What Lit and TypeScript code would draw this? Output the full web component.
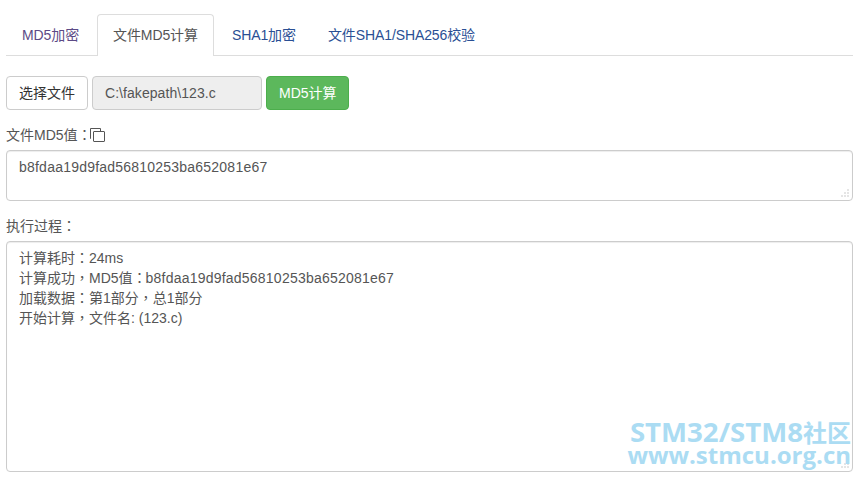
import { LitElement, html, css } from "lit";
import { customElement } from "lit/decorators.js";

const grip = html`<svg class="grip" width="8" height="8" viewBox="0 0 8 8" fill="#999">
  <rect x="6.5" y="0.5" width="1" height="1" />
  <rect x="3.5" y="3.5" width="1" height="1" />
  <rect x="6.5" y="3.5" width="1" height="1" />
  <rect x="0.5" y="6.5" width="1" height="1" />
  <rect x="3.5" y="6.5" width="1" height="1" />
  <rect x="6.5" y="6.5" width="1" height="1" />
</svg>`;

const HASH = "b8fdaa19d9fad56810253ba652081e67";

@customElement("app-root")
export class AppRoot extends LitElement {
  static styles = css`
    :host {
      display: block;
      position: relative;
      width: 861px;
      height: 477px;
      overflow: hidden;
      background: #fff;
      box-sizing: border-box;
      padding: 14px 8px 0 6px;
      font-family: "Liberation Sans", "Noto Sans CJK SC", sans-serif;
      font-size: 14px;
      line-height: 20px;
      color: #555;
    }
    * { box-sizing: border-box; }
    .p { font-family: "Noto Sans CJK TC", sans-serif; line-height: 1; }
    .tabs {
      display: flex;
      gap: 2px;
      height: 42px;
      border-bottom: 1px solid #ddd;
    }
    .tab {
      height: 41px;
      padding: 10px 15px 0;
      color: #2a4f94;
      border: 1px solid transparent;
      border-bottom: 0;
      border-radius: 4px 4px 0 0;
      white-space: nowrap;
      letter-spacing: -0.1px;
    }
    .tab.visited { color: #5c4a86; }
    .tab.last { margin-left: -2px; }
    .tab.active {
      height: 42px;
      color: #555;
      background: #fff;
      border-color: #ddd;
    }
    .file-row {
      display: flex;
      gap: 4px;
      margin-top: 20px;
      height: 34px;
    }
    .btn {
      height: 34px;
      border: 1px solid #ccc;
      border-radius: 4px;
      padding: 6px 12px;
      background: #fff;
      color: #333;
      font: inherit;
      white-space: nowrap;
    }
    .btn.green {
      width: 83px;
      background: #5cb85c;
      border-color: #4cae4c;
      color: #fff;
    }
    .path {
      width: 170px;
      height: 34px;
      padding: 6px 12px;
      border: 1px solid #ccc;
      border-radius: 4px;
      background: #eee;
      color: #555;
      letter-spacing: 0.06px;
    }
    .label {
      display: flex;
      align-items: center;
      height: 20px;
      margin-top: 15px;
      color: #555;
    }
    .label svg { display: block; margin-left: -2px; }
    .field {
      position: relative;
      width: 847px;
      margin-top: 5px;
      padding: 6px 12px;
      border: 1px solid #ccc;
      border-radius: 4px;
      background: #fff;
      color: #555;
      box-shadow: inset 0 1px 1px rgba(0, 0, 0, 0.075);
    }
    .md5 { height: 51px; }
    .log { height: 231px; }
    .line { height: 20px; white-space: nowrap; }
    .hash { letter-spacing: 0.22px; }
    .hash.tight { margin-left: -1px; }
    .grip {
      position: absolute;
      right: 3px;
      bottom: 3px;
    }
    .mark {
      position: absolute;
      right: 10px;
      top: 421px;
      color: #abdcf3;
      font-family: "Open Sans", "Noto Sans CJK SC", sans-serif;
      font-weight: 700;
      text-align: right;
      white-space: nowrap;
      pointer-events: none;
    }
    .mark .one { font-size: 27.6px; line-height: 20px; }
    .mark .one span { font-size: 24px; }
    .mark .two { font-size: 24px; line-height: 24px; }
  `;

  render() {
    return html`
      <div class="tabs">
        <div class="tab visited">MD5加密</div>
        <div class="tab active">文件MD5计算</div>
        <div class="tab">SHA1加密</div>
        <div class="tab last">文件SHA1/SHA256校验</div>
      </div>
      <div class="file-row">
        <button class="btn">选择文件</button>
        <div class="path">C:\\fakepath\\123.c</div>
        <button class="btn green">MD5计算</button>
      </div>
      <div class="label">
        <span>文件MD5值<span class="p">：</span></span>
        <svg width="15" height="14" viewBox="0 0 15 14" fill="none" stroke="#555" stroke-width="1">
          <path d="M1 10.5H.5V.5H10.5V3" />
          <rect x="3.5" y="3.5" width="11" height="10" rx="0.5" />
        </svg>
      </div>
      <div class="field md5"><span class="hash">${HASH}</span>${grip}</div>
      <div class="label"><span>执行过程<span class="p">：</span></span></div>
      <div class="field log">
        <div class="line">计算耗时<span class="p">：</span>24ms</div>
        <div class="line">计算成功<span class="p">，</span>MD5值<span class="p">：</span><span class="hash tight">${HASH}</span></div>
        <div class="line">加载数据<span class="p">：</span>第1部分<span class="p">，</span>总1部分</div>
        <div class="line">开始计算<span class="p">，</span>文件名: (123.c)</div>
        ${grip}
      </div>
      <div class="mark">
        <div class="one">STM32/STM8<span>社区</span></div>
        <div class="two">www.stmcu.org.cn</div>
      </div>
    `;
  }
}
